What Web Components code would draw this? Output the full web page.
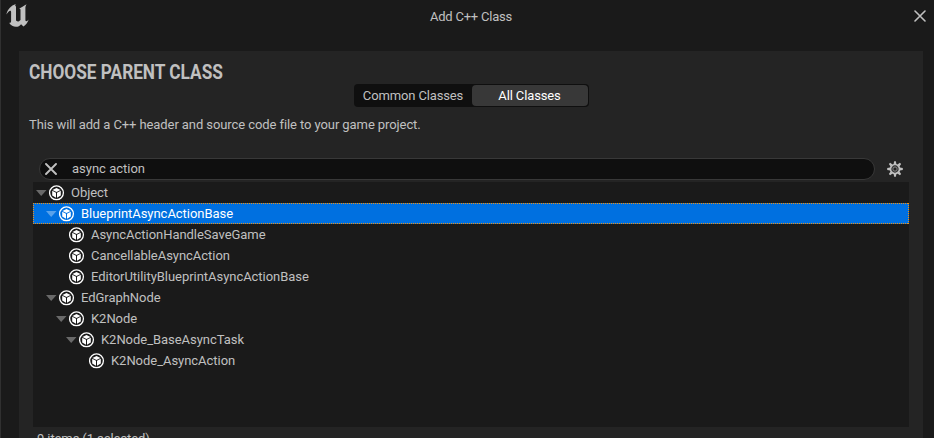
<!DOCTYPE html>
<html lang="en">
<head>
<meta charset="utf-8">
<title>Add C++ Class</title>
<style>
body{margin:0;background:#1a1a1a;overflow:hidden}
</style>
</head>
<body>
<add-class-dialog></add-class-dialog>
<script>
const define = (name, html, setup) => customElements.define(name, class extends HTMLElement {
  connectedCallback() {
    if (this.shadowRoot) return;
    const t = document.createElement('template');
    t.innerHTML = html;
    this.attachShadow({mode: 'open'}).append(t.content.cloneNode(true));
    if (setup) setup(this, this.shadowRoot);
  }
});

define('engine-logo', `<style>:host{display:block;width:24px;height:24px}svg{display:block}</style>
<svg width="24" height="24" viewBox="0 0 24 24"><path fill="#c0c0c0" d="M.4 11.500C1.300 6.500 5 2.500 9.900 1 9 2 9 2.700 10 3.600V17.300c.4 1 1.700 1.400 3 .9L14.500 17V7c0-1-.6-1.500-1.500-1.200C15.300 4.200 17.500 3.200 20.600 1.200 19.700 2.700 19.400 3.500 19.400 5v12.200c.2 1.400 1.700 1.300 3.300-.7-1.100 3.400-3 5.700-5.300 6.900l-2.300-2.200c-1.200 1.700-3 2.600-5.200 2.600-2.400 0-5.200-1.300-7-4.200 1.300.700 2.200.200 2.200-1.500V9C5 6.500 2.500 8.100.400 11.500Z"/></svg>`);

define('cross-icon', `<style>:host{display:block}svg{display:block;width:100%;height:100%}path{stroke-width:var(--w,1.6)}</style>
<svg viewBox="0 0 12 12"><path d="M1 1 11 11M11 1 1 11" stroke="currentColor" stroke-linecap="round"/></svg>`);

define('class-icon', `<style>:host{display:block;width:16px;height:16px}svg{display:block}</style>
<svg width="16" height="16" viewBox="0 0 16 16"><circle cx="7.500" cy="7.800" r="6.900" fill="var(--row-bg,#1a1a1a)" stroke="#fff" stroke-width="1.300"/>
<path fill="#fff" d="M7.500 2.900 11.500 4.900 7.500 7 3.500 4.900ZM3.200 5.800 7 7.800V12.700L3.200 10.600ZM11.800 5.800 8 7.800V12.700L11.800 10.600Z"/></svg>`);

define('gear-icon', `<style>:host{display:block;width:16px;height:16px}svg{display:block}</style>
<svg width="16" height="16" viewBox="-8 -8 16 16"><g fill="#c0c0c0"></g><circle r="4.500" fill="none" stroke="#c0c0c0" stroke-width="1.700"/><circle r="2.100" fill="none" stroke="#777" stroke-width="1.200"/></svg>`,
(h, root) => {
  const g = root.querySelector('g');
  for (let a = 0; a < 360; a += 45) {
    const p = document.createElementNS('http://www.w3.org/2000/svg', 'path');
    p.setAttribute('d', 'M-1.400-4.800-.9-7.800H.9L1.400-4.800Z');
    p.setAttribute('transform', `rotate(${a})`);
    g.append(p);
  }
});

define('title-bar', `<style>
:host{display:grid;grid-template-columns:36px 1fr 36px;height:51px;align-items:start;color:#c0c0c0}
engine-logo{margin:3px 0 0 5px}
.t{text-align:center;line-height:16px;padding-top:9px;padding-left:7px;letter-spacing:-.22px}
cross-icon{width:12px;height:12px;margin:10px 0 0 16px}
</style><engine-logo></engine-logo><div class="t"><slot></slot></div><cross-icon></cross-icon>`);

define('segmented-control', `<style>
:host{display:grid;grid-template-columns:117px 116px;box-sizing:border-box;width:235px;height:23px;padding:1px;background:#0f0f0f;border-radius:4px;letter-spacing:-.13px}
::slotted(*){display:block;text-align:center;line-height:21px;border-radius:4px;color:#c0c0c0;padding-right:1px}
::slotted([selected]){background:#383838;color:#fff}
</style><slot></slot>`);

define('search-field', `<style>
:host{display:flex;align-items:center;box-sizing:border-box;width:836px;height:22px;border:1px solid #383838;border-radius:11px;background:#0f0f0f;color:#c0c0c0;padding-left:5px}
cross-icon{width:12px;height:12px;margin-right:15px;--w:1.900}
::slotted(*){padding-bottom:2px}
</style><cross-icon></cross-icon><slot></slot>`);

define('class-row', `<style>
:host{display:flex;align-items:center;height:21px;box-sizing:border-box;color:#c0c0c0;padding-left:calc(3px + var(--depth)*10px);position:relative;letter-spacing:-.04px}
:host([selected]){background:#0070e0;color:#fff;--row-bg:#0070e0}
:host([selected])::after{content:"";position:absolute;inset:0;background:
repeating-linear-gradient(90deg,#f09010 0 1px,transparent 1px 2px) 0 0/100% 1px no-repeat,
repeating-linear-gradient(90deg,#f09010 0 1px,transparent 1px 2px) 0 100%/100% 1px no-repeat,
repeating-linear-gradient(#f09010 0 1px,transparent 1px 2px) 0 0/1px 100% no-repeat,
repeating-linear-gradient(#f09010 0 1px,transparent 1px 2px) 100% 0/1px 100% no-repeat}
.a{width:12px;height:21px;flex:none}
.a svg{display:block}
:host([leaf]) .a svg{visibility:hidden}
class-icon{margin:0 6px 0 1px;flex:none}
.n{line-height:21px;white-space:nowrap}
</style><div class="a"><svg width="12" height="21"><path d="M0 8H10.500L5.200 14Z" fill="#fff" fill-opacity=".35"/></svg></div><class-icon></class-icon><div class="n"><slot></slot></div>`,
h => h.style.setProperty('--depth', h.getAttribute('depth')));

define('class-tree', `<style>:host{display:block;width:876px;height:245px;background:#1a1a1a}</style><slot></slot>`);

define('add-class-dialog', `<style>
:host{display:block;box-sizing:border-box;width:934px;height:438px;overflow:hidden;background:#1a1a1a;border-left:1px solid #303030;color:#c0c0c0;font:13px Roboto,"Liberation Sans",sans-serif}
main{display:flex;flex-direction:column;box-sizing:border-box;width:904px;height:400px;margin-left:18px;background:#242424;padding:0 14px 0 10px}
h1{font:700 20px/24px Roboto,sans-serif;margin:9px 0 0;height:24px;white-space:nowrap}
h1 span{display:inline-block;transform-origin:0 50%;transform:scaleX(.862)}
segmented-control{margin-left:325px}
p{margin:10px 0 0;line-height:16px;letter-spacing:-.085px}
.s{display:flex;align-items:center;margin:25px 0 0 10px;gap:12px;height:22px}
class-tree{margin:2px 0 0 4px}
footer{margin:4px 0 0 8px;line-height:16px;white-space:nowrap;letter-spacing:-.1px}
</style>
<title-bar>Add C++ Class</title-bar>
<main>
<h1><span>CHOOSE PARENT CLASS</span></h1>
<segmented-control><span>Common Classes</span><span selected>All Classes</span></segmented-control>
<p><span>This will add a C++ header and source code file to your game project.</span></p>
<div class="s"><search-field><span>async action</span></search-field><gear-icon></gear-icon></div>
<class-tree>
<class-row depth="0"><span>Object</span></class-row>
<class-row depth="1" selected><span>BlueprintAsyncActionBase</span></class-row>
<class-row depth="2" leaf><span>AsyncActionHandleSaveGame</span></class-row>
<class-row depth="2" leaf><span>CancellableAsyncAction</span></class-row>
<class-row depth="2" leaf><span>EditorUtilityBlueprintAsyncActionBase</span></class-row>
<class-row depth="1"><span>EdGraphNode</span></class-row>
<class-row depth="2"><span>K2Node</span></class-row>
<class-row depth="3"><span>K2Node_BaseAsyncTask</span></class-row>
<class-row depth="4" leaf><span>K2Node_AsyncAction</span></class-row>
</class-tree>
<footer><span>9 items (1 selected)</span></footer>
</main>`);
</script>
</body>
</html>
